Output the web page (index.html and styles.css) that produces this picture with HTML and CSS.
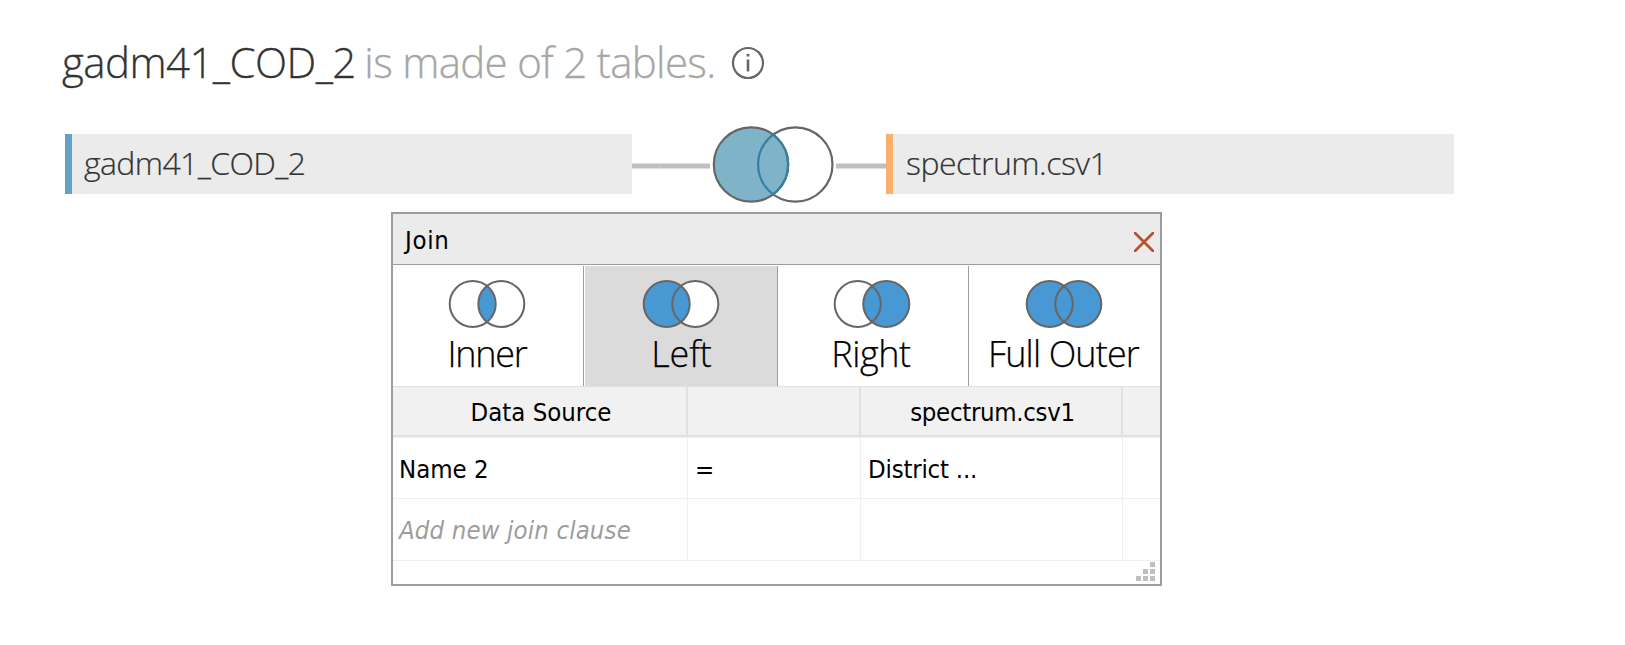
FILE: index.html
```html
<!DOCTYPE html>
<html lang="en">
<head>
<meta charset="utf-8">
<title>gadm41_COD_2</title>
<link rel="stylesheet" href="styles.css">
</head>
<body>
<main class="canvas">
  <h1 class="title">
    <span class="t t-name">gadm41_COD_2</span>
    <span class="t t-rest">is made of 2 tables.</span>
    <svg class="info" width="34" height="34" viewBox="0 0 34 34"><circle cx="17" cy="17" r="15" fill="none" stroke="#666" stroke-width="2.2"/><path d="M17 13.500v12" stroke="#666" stroke-width="2.600"/><path d="M15.600 9.200h2.800" stroke="#666" stroke-width="2.600"/></svg>
  </h1>
  <section class="flow">
    <div class="card blue"><span class="t t-c1">gadm41_COD_2</span></div>
    <svg class="link" width="254" height="80" viewBox="632 124 254 80">
      <path d="M632 166h78M836 166h50" stroke="#bfbfbf" stroke-width="5"/>
      <path d="M659.5 163.500v5" stroke="#cdcdcd" stroke-width="1"/>
      <clipPath id="lens"><circle cx="751" cy="164.500" r="37.200"/></clipPath>
      <clipPath id="lens2"><circle cx="795.300" cy="164.500" r="38.200"/></clipPath>
      <circle cx="795.300" cy="164.500" r="37.200" fill="#fff" stroke="#666" stroke-width="2.200"/>
      <circle cx="751" cy="164.500" r="37.200" fill="#7eb3c8" stroke="#666" stroke-width="2.200"/>
      <circle cx="795.300" cy="164.500" r="37.200" fill="none" stroke="#3480a0" stroke-width="2.200" clip-path="url(#lens)"/>
      <circle cx="751" cy="164.500" r="37.200" fill="none" stroke="#3480a0" stroke-width="2.200" clip-path="url(#lens2)"/>
    </svg>
    <div class="card orange"><span class="t t-c2">spectrum.csv1</span></div>
  </section>
  <section class="dialog">
    <header class="bar"><span class="t t-join">Join</span>
      <svg class="close" width="20" height="20" viewBox="0 0 20 20"><path d="M1 1L19 19M19 1L1 19" stroke="#b5532f" stroke-width="2.700" stroke-linecap="round"/></svg>
    </header>
    <nav class="tabs">
      <div class="tab inner">
        <svg class="venn" width="78" height="50" viewBox="0 0 78 50"><clipPath id="c"><circle cx="24.700" cy="25" r="23"/></clipPath><circle cx="53.300" cy="25" r="23" fill="#4898d3" clip-path="url(#c)"/><g class="ring"><circle cx="24.700" cy="25" r="23"/><circle cx="53.300" cy="25" r="23"/></g></svg>
        <span class="t t-inner">Inner</span>
      </div>
      <div class="tab left">
        <svg class="venn" width="78" height="50" viewBox="0 0 78 50"><circle cx="53.300" cy="25" r="23" fill="#fff"/><circle cx="24.700" cy="25" r="23" fill="#4898d3"/><g class="ring"><circle cx="24.700" cy="25" r="23"/><circle cx="53.300" cy="25" r="23"/></g></svg>
        <span class="t t-left">Left</span>
      </div>
      <div class="tab right">
        <svg class="venn" width="78" height="50" viewBox="0 0 78 50"><circle cx="53.300" cy="25" r="23" fill="#4898d3"/><g class="ring"><circle cx="24.700" cy="25" r="23"/><circle cx="53.300" cy="25" r="23"/></g></svg>
        <span class="t t-right">Right</span>
      </div>
      <div class="tab full">
        <svg class="venn" width="78" height="50" viewBox="0 0 78 50"><circle cx="24.700" cy="25" r="23" fill="#4898d3"/><circle cx="53.300" cy="25" r="23" fill="#4898d3"/><g class="ring"><circle cx="24.700" cy="25" r="23"/><circle cx="53.300" cy="25" r="23"/></g></svg>
        <span class="t t-full">Full Outer</span>
      </div>
    </nav>
    <div class="row head"><div><span class="t t-ds">Data Source</span></div><div></div><div><span class="t t-sp">spectrum.csv1</span></div><div></div></div>
    <div class="row body first"><div><span class="t t-n2">Name 2</span></div><div><span class="t t-eq">=</span></div><div><span class="t t-di">District ...</span></div><div></div></div>
    <div class="row body"><div><span class="t t-add">Add new join clause</span></div><div></div><div></div><div></div></div>
    <footer class="foot"><svg width="20" height="20" viewBox="0 0 20 20" fill="#bfbfbf"><path d="M14 0h5v5h-5zM7 7h5v5H7zM14 7h5v5h-5zM0 14h5v5H0zM7 14h5v5H7zM14 14h5v5h-5z"/></svg></footer>
  </section>
</main>
</body>
</html>
```
FILE: styles.css
```css
* { box-sizing: border-box; }
body { margin: 0; background: #fff; color: #333; font-family: "Open Sans", sans-serif; font-weight: 300; }
.t { white-space: pre; }
.canvas { padding: 32px 0 0 65px; }
.title { display: flex; align-items: center; height: 60px; margin: 0; font-size: 42px; font-weight: 300; line-height: 60px; }
.t-name { margin-left: -3px; letter-spacing: -0.55px; -webkit-text-stroke: 0.3px #333; }
.t-rest { color: #a6a6a6; margin-left: 8.5px; letter-spacing: -0.68px; -webkit-text-stroke: 0.3px #a6a6a6; }
.info { margin: 2px 0 0 15.3px; }
.flow { display: flex; align-items: center; height: 80px; margin-top: 32px; }
.card { width: 567px; height: 60px; background: #ebebeb; border-left: 7px solid #62a3c5; padding-left: 12px; font-size: 32px; line-height: 58px; letter-spacing: -0.62px; -webkit-text-stroke: 0.2px #333; }
.orange { width: 568px; padding-left: 13px; border-color: #f9b06b; letter-spacing: -0.5px; }
.link { flex: none; }
.dialog { width: 771px; height: 374px; margin: 8px 0 0 326px; border: 2px solid #9d9d9d; color: #000; background: #fff; }
.bar { display: flex; align-items: center; justify-content: space-between; height: 51px; background: #ebebeb; border-bottom: 1px solid #9d9d9d; padding: 3px 6px 0 12px; font: 25.5px "DejaVu Sans Condensed", sans-serif; }
.t-join { letter-spacing: 0.7px; margin-top: -2px; }
.close { margin-top: 3px; }
.tabs { display: flex; height: 121px; padding-top: 1px; }
.tab { display: flex; flex-direction: column; align-items: center; padding: 13px 2px 0 0; border-right: 1px solid #9d9d9d; font-size: 36px; line-height: 50px; -webkit-text-stroke: 0.25px #000; }
.inner { width: 191px; }
.left { width: 194px; background: #dbdbdb; border-left: 1px solid #fff; padding-right: 0; }
.right { width: 191px; }
.full { width: 191px; border: 0; }
.t-inner { letter-spacing: -1.3px; }
.t-left { letter-spacing: -0.2px; padding-left: 1px; }
.t-right { letter-spacing: -0.4px; margin-left: -2px; }
.t-full { letter-spacing: -0.85px; }
.venn { flex: none; }
.ring { fill: none; stroke: #666; stroke-width: 2px; }
.row { display: grid; grid-template-columns: 295px 173px 262px 1fr; font: 25.5px "DejaVu Sans Condensed", sans-serif; }
.row > div { display: flex; align-items: center; }
.head { height: 52px; border-top: 1px solid #e1e1e1; border-bottom: 1px solid #efefef; }
.head > div { background: #f1f1f1; border-bottom: 2px solid #e1e1e1; border-right: 2px solid #e1e1e1; justify-content: center; padding: 2px 0 0 3px; }
.t-sp { letter-spacing: -0.3px; }
.body { height: 62px; }
.first { height: 61px; }
.body > div { border-right: 1px solid #efefef; border-bottom: 1px solid #efefef; padding: 1px 0 0 7px; }
.body > div:first-child { padding-left: 6px; }
.row > div:last-child { border-right: 0; }
.t-di { letter-spacing: -0.2px; }
.t-add { color: #9d9d9d; font-style: italic; letter-spacing: 0.15px; }
.foot { display: flex; justify-content: flex-end; padding: 1px 4px 0 0; }
```
